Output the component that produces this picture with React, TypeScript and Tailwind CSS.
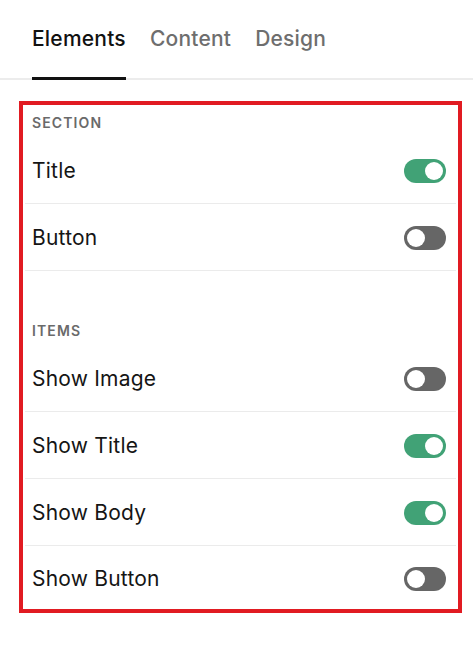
import React from 'react';

const sections = [
  {
    label: 'SECTION',
    items: [
      { name: 'Title', on: true },
      { name: 'Button', on: false },
    ],
  },
  {
    label: 'ITEMS',
    items: [
      { name: 'Show Image', on: false },
      { name: 'Show Title', on: true },
      { name: 'Show Body', on: true },
      { name: 'Show Button', on: false },
    ],
  },
];

function Toggle({ on }: { on: boolean }) {
  return (
    <div
      className={`flex h-[24px] w-[42px] items-center rounded-full px-[3px] ${
        on ? 'justify-end bg-[#41a276]' : 'justify-start bg-[#666666]'
      }`}
    >
      <div className="h-[18px] w-[18px] rounded-full bg-white" />
    </div>
  );
}

export default function App() {
  return (
    <div className="min-h-[654px] w-[473px] bg-white" style={{ fontFamily: 'Inter, "Noto Sans", sans-serif' }}>
      {/* Tabs */}
      <div className="flex h-[80px] items-end gap-6 border-b-2 border-[#ececec] px-8">
        {['Elements', 'Content', 'Design'].map((tab, i) => (
          <div
            key={tab}
            className={`-mb-[2px] flex h-[80px] items-start border-b-[3px] pt-[25px] text-[21px] leading-[28px] font-medium tracking-[0.01em] ${
              i === 0 ? 'border-[#111111] text-[#111111]' : 'border-transparent text-[#6e6e6e]'
            }`}
          >
            {tab}
          </div>
        ))}
      </div>

      {/* Settings panel */}
      <div className="ml-[19px] mt-[21px] w-[443px] border-4 border-[#e11b22] px-[2px]">
        {sections.map((section, si) => (
          <div key={section.label} className={si === 0 ? 'pt-[9px]' : 'pt-[51px]'}>
            <div className="h-[18px] px-[7px] text-[14px] leading-[18px] font-semibold tracking-[0.08em] text-[#6a6a6a]">
              {section.label}
            </div>
            <div className="mt-[5px]">
              {section.items.map((item, ii) => {
                const last = si === sections.length - 1 && ii === section.items.length - 1;
                return (
                  <div
                    key={item.name}
                    className={`flex items-center justify-between pl-[7px] pr-[10px] ${
                      last ? 'h-[63px] pt-[3px]' : 'h-[67px] border-b border-[#ebebeb] pt-[1px]'
                    }`}
                  >
                    <span className="text-[21px] leading-[28px] tracking-[0.01em] text-[#151515]">{item.name}</span>
                    <Toggle on={item.on} />
                  </div>
                );
              })}
            </div>
          </div>
        ))}
      </div>
    </div>
  );
}
